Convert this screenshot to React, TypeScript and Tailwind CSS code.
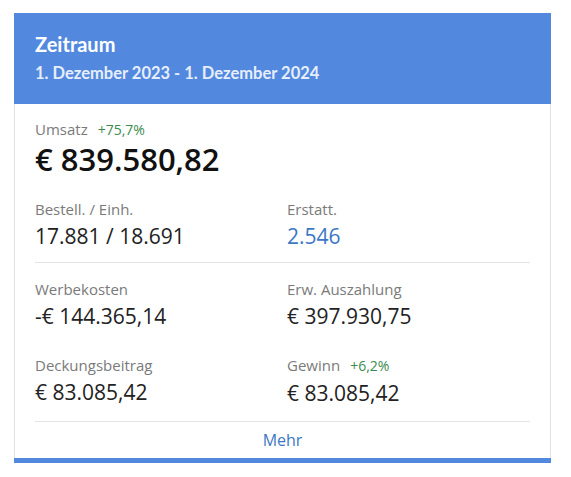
import React from 'react';

interface Metric {
  label: string;
  value: string;
  change?: string;
  accent?: boolean;
}

const rows: Metric[][] = [
  [
    { label: 'Bestell. / Einh.', value: '17.881 / 18.691' },
    { label: 'Erstatt.', value: '2.546', accent: true },
  ],
  [
    { label: 'Werbekosten', value: '-€ 144.365,14' },
    { label: 'Erw. Auszahlung', value: '€ 397.930,75' },
  ],
  [
    { label: 'Deckungsbeitrag', value: '€ 83.085,42' },
    { label: 'Gewinn', value: '€ 83.085,42', change: '+6,2%' },
  ],
];

const MetricCell: React.FC<{ m: Metric }> = ({ m }) => (
  <div>
    <div className="flex items-baseline gap-[10px] text-[15px] leading-5 text-[#7a7a7a]">
      <span>{m.label}</span>
      {m.change && <span className="text-[14px] text-[#3d8b4f]">{m.change}</span>}
    </div>
    <div className={`mt-[3px] text-[21px] leading-7 ${m.accent ? 'text-[#3c78c3]' : 'text-[#222]'}`}>
      {m.value}
    </div>
  </div>
);

const MetricRow: React.FC<{ row: Metric[] }> = ({ row }) => (
  <div className="grid grid-cols-[252px_1fr]">
    <MetricCell m={row[0]} />
    <MetricCell m={row[1]} />
  </div>
);

const App: React.FC = () => {
  return (
    <div className="min-h-[477px] bg-white pt-[13px] pl-[14px]" style={{ fontFamily: '"Open Sans", sans-serif' }}>
      <div className="w-[537px]">
        <div className="h-[91px] bg-[#5289df] px-[21px] pt-[19px]" style={{ fontFamily: 'Lato, sans-serif' }}>
          <div className="text-[20px] font-bold leading-6 text-white">Zeitraum</div>
          <div className="mt-[7px] text-[16.5px] font-bold leading-5 text-[#e6eefb]">1. Dezember 2023 - 1. Dezember 2024</div>
        </div>
        <div className="border-x border-[#e2e2e2] px-[20px] pt-[15px]">
          <div className="flex items-baseline gap-[10px] text-[15px] leading-5 text-[#7a7a7a]">
            <span>Umsatz</span>
            <span className="text-[14px] text-[#3d8b4f]">+75,7%</span>
          </div>
          <div className="text-[31px] font-semibold leading-[38px] text-[#111]">€ 839.580,82</div>
          <div className="mt-[21px] pb-[12px]">
            <MetricRow row={rows[0]} />
          </div>
          <div className="border-t border-[#e4e4e4]" />
          <div className="pt-[16px]">
            <MetricRow row={rows[1]} />
          </div>
          <div className="pt-[25px] pb-[14px]">
            <MetricRow row={rows[2]} />
          </div>
          <div className="border-t border-[#e4e4e4]" />
          <div className="pt-[7px] pb-[7px] text-center text-[16px] leading-[22px] text-[#3c78c3]">Mehr</div>
        </div>
        <div className="h-[5px] bg-[#5289df]" />
      </div>
    </div>
  );
};

export default App;
